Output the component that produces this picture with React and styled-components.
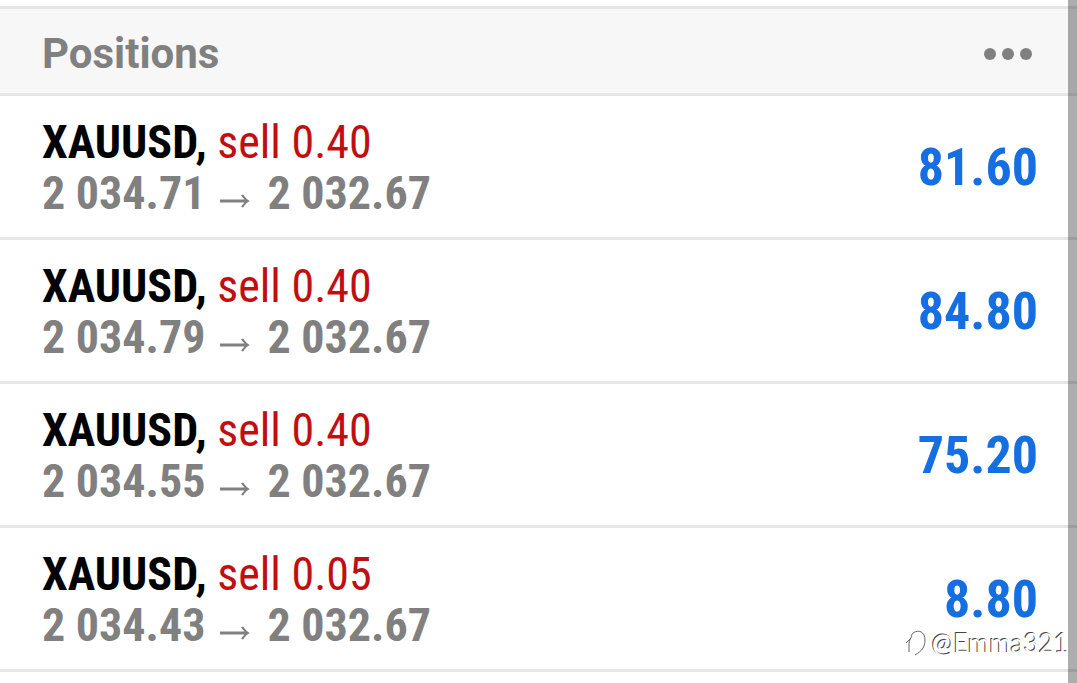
import React from 'react';
import styled, { createGlobalStyle } from 'styled-components';

const positions = [
  { id: 1, symbol: 'XAUUSD', side: 'sell', volume: '0.40', open: '2 034.71', current: '2 032.67', profit: '81.60' },
  { id: 2, symbol: 'XAUUSD', side: 'sell', volume: '0.40', open: '2 034.79', current: '2 032.67', profit: '84.80' },
  { id: 3, symbol: 'XAUUSD', side: 'sell', volume: '0.40', open: '2 034.55', current: '2 032.67', profit: '75.20' },
  { id: 4, symbol: 'XAUUSD', side: 'sell', volume: '0.05', open: '2 034.43', current: '2 032.67', profit: '8.80' },
];

export default function App() {
  return (
    <>
      <GlobalStyle />
      <Screen>
        <Header>
          <Title>Positions</Title>
          <MenuButton type="button" aria-label="More options">
            <Dot />
            <Dot />
            <Dot />
          </MenuButton>
        </Header>

        <List>
          {positions.map((position) => (
            <Row key={position.id}>
              <div>
                <Line>
                  <Symbol>{position.symbol},</Symbol> <Side>{position.side} {position.volume}</Side>
                </Line>
                <Prices>
                  <span>{position.open}</span>
                  <Arrow viewBox="0 0 32 16" aria-hidden="true">
                    <path d="M1 6.600H25.500C24 5 22.800 3.600 22 2.200L24 1.500C26 4.500 28.500 6.800 31 8C28.500 9.200 26 11.500 24 14.500L22 13.800C22.800 12.400 24 11 25.500 9.400H1z" />
                  </Arrow>
                  <span>{position.current}</span>
                </Prices>
              </div>
              <Profit>{position.profit}</Profit>
            </Row>
          ))}
        </List>

        <Watermark>
          <WatermarkLogo viewBox="0 0 24 28" aria-hidden="true">
            <path d="M2 14l4-4M8 7c-2 3-3 5-3 8v8" />
            <path d="M9 4c6-4 12-1 12 7 0 7-3 11-10 15M9 4l-2 3" />
          </WatermarkLogo>
          @Emma321
        </Watermark>
        <Edge />
      </Screen>
    </>
  );
}

const GlobalStyle = createGlobalStyle`
  body {
    margin: 0;
    background: #fff;
    overflow: hidden;
  }
`;

const Screen = styled.main`
  position: relative;
  min-height: 100vh;
  padding-top: 6px;
  box-sizing: border-box;
  overflow: hidden;
  font-family: 'Roboto Condensed', Roboto, sans-serif;
`;

const Header = styled.header`
  display: flex;
  align-items: center;
  justify-content: space-between;
  padding: 20px 45px 14px 42px;
  background: #f7f7f7;
  border-top: 3px solid #e6e6e6;
  border-bottom: 3px solid #e6e6e6;
`;

const Title = styled.h1`
  margin: 0;
  font-family: Roboto, sans-serif;
  font-size: 42px;
  font-weight: 700;
  line-height: 50px;
  color: #808080;
`;

const MenuButton = styled.button`
  display: flex;
  gap: 6px;
  padding: 0;
  border: 0;
  background: none;
`;

const Dot = styled.span`
  width: 12px;
  height: 12px;
  border-radius: 50%;
  background: #808080;
`;

const List = styled.ul`
  margin: 0;
  padding: 0;
  list-style: none;
`;

const Row = styled.li`
  display: flex;
  align-items: center;
  justify-content: space-between;
  padding: 21px 39px 18px 42px;
  border-bottom: 3px solid #e6e6e6;
`;

const Line = styled.div`
  font-size: 46px;
  line-height: 51px;
  white-space: nowrap;
`;

const Symbol = styled.strong`
  font-weight: 700;
  color: #000;
`;

const Side = styled.span`
  color: #c00f12;
`;

const Prices = styled(Line)`
  display: flex;
  align-items: center;
  font-weight: 700;
  color: #808080;
`;

const Arrow = styled.svg`
  width: 32px;
  height: 16px;
  margin: 14px 16px 0 14px;
  fill: currentColor;
`;

const Profit = styled.strong`
  font-size: 52px;
  font-weight: 700;
  line-height: 60px;
  color: #166fe0;
`;

const Watermark = styled.div`
  position: absolute;
  right: 8px;
  bottom: 24px;
  display: flex;
  align-items: center;
  gap: 4px;
  font-family: Lato, sans-serif;
  font-size: 26px;
  line-height: 32px;
  color: #fff;
  text-shadow: -1px -1px 0 #444;
`;

const WatermarkLogo = styled.svg`
  width: 24px;
  height: 28px;
  fill: none;
  stroke: #666;
  stroke-width: 1;
`;

const Edge = styled.div`
  position: absolute;
  top: 0;
  right: 0;
  bottom: 0;
  width: 9px;
  background: rgba(0, 0, 0, 0.32);
`;
